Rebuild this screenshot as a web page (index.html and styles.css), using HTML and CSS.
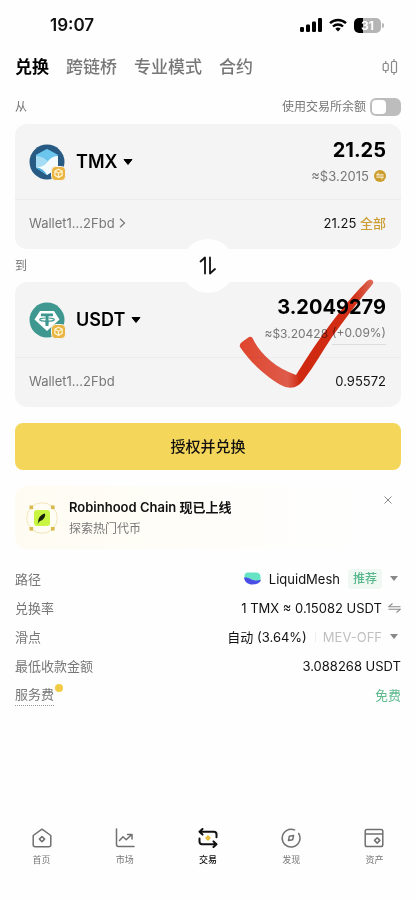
FILE: index.html
```html
<!DOCTYPE html>
<html lang="zh-CN">
<head>
<meta charset="utf-8">
<meta name="viewport" content="width=device-width, initial-scale=1">
<title>兑换</title>
<link rel="stylesheet" href="styles.css">
</head>
<body>
<div class="app">
  <header class="status">
    <span class="clock">19:07</span>
    <span class="indicators">
      <svg width="22" height="14" viewBox="0 0 22 14"><rect x="0" y="9" width="4" height="5" rx="1.2"/><rect x="6" y="6.500" width="4" height="7.500" rx="1.200"/><rect x="12" y="3.500" width="4" height="10.500" rx="1.200"/><rect x="18" y="0" width="4" height="14" rx="1.200"/></svg>
      <svg width="18" height="14" viewBox="0 0 18 14"><g fill="none" stroke="#000" stroke-width="2.400"><path d="M1 5.200a11.500 11.500 0 0 1 16 0"/><path d="M4 8.500a7.200 7.200 0 0 1 10 0"/></g><path d="M6.300 10.800a4 4 0 0 1 5.400 0L9 13.600z"/></svg>
      <span class="battery"><span class="level">31</span><span class="cap"></span></span>
    </span>
  </header>

  <nav class="tabs">
    <a href="#swap" class="tab active">兑换</a>
    <a href="#bridge" class="tab">跨链桥</a>
    <a href="#pro" class="tab">专业模式</a>
    <a href="#futures" class="tab">合约</a>
    <button class="icon-btn chart" aria-label="K线">
      <svg width="16" height="18" viewBox="0 0 16 18" fill="none" stroke="#888" stroke-width="1.200"><rect x="1.200" y="5.500" width="5" height="7" rx="1"/><path d="M3.700 3V5.500M3.700 12.500V15M12 1v2.500M12 14.500V17"/><rect x="9.500" y="3.500" width="5" height="11" rx="1"/></svg>
    </button>
  </nav>

  <main>
    <div class="line from">
      <span>从</span>
      <label class="balance">使用交易所余额<input type="checkbox" class="switch"></label>
    </div>

    <section class="card">
      <div class="top">
        <button class="token">
          <span class="coin">
            <svg width="36" height="36" viewBox="0 0 36 36"><circle cx="18" cy="18" r="17.500" fill="#285b83"/><path d="M18 5l11 6v13l-11 7-11-7V11z" fill="#4fb3e2"/><path d="M18 5l11 6-9 5.500c-4-2.500-8-3.500-13-4.500V11z" fill="#6cc5ec"/><path d="M7 12c5 .5 9 2 12 5-3 4-6 6-12 6z" fill="#a4dcf4"/><path d="M7 23c6 0 9-2 12-6 3-3.500 6-5 10-5v12l-11 7z" fill="#f4fbfe"/><path d="M7 23.500c4-.3 8 2.500 11 7.500z" fill="#48aadb"/></svg>
            <svg class="chain" width="15" height="15" viewBox="0 0 15 15"><rect x=".5" y=".5" width="14" height="14" rx="4" fill="#e9b440" stroke="#f4f4f4"/><path d="M7.500 3.200l3.600 2v4.200l-3.600 2.200-3.600-2.200V5.200zM4.500 5.500l3 1.700 3-1.700M7.500 7.200v3.800" fill="none" stroke="#fff3cf" stroke-width="1.300"/></svg>
          </span>
          <span>TMX</span>
          <svg width="10" height="6" viewBox="0 0 10 6"><path d="M1 .5h8L5 5.500z" stroke="#000" stroke-linejoin="round"/></svg>
        </button>
        <div class="amount">
          <span class="value">21.25</span>
          <span class="fiat">≈$3.2015
            <svg width="12" height="12" viewBox="0 0 12 12"><circle cx="6" cy="6" r="6" fill="#cc9d2b"/><path d="M9.600 4.900H2.600l2.200-2M2.400 7.100h7l-2.200 2" fill="none" stroke="#fff" stroke-width="1"/></svg>
          </span>
        </div>
      </div>
      <div class="bottom">
        <button class="wallet">Wallet1...2Fbd
          <svg width="7" height="10" viewBox="0 0 7 10" fill="none" stroke="#777" stroke-width="1.200"><path d="M1 .8l4.500 4.200L1 9.200"/></svg>
        </button>
        <span>21.25 <button class="all">全部</button></span>
      </div>
    </section>

    <div class="line to">
      <span>到</span>
      <button class="flip" aria-label="互换">
        <svg width="18" height="20" viewBox="0 0 18 20" fill="none" stroke="#111" stroke-width="1.800" stroke-linecap="round" stroke-linejoin="round"><path d="M1.500 5.500L6 1.500v16M11 1.500v16l5-4.500"/></svg>
      </button>
    </div>

    <section class="card">
      <div class="top">
        <button class="token">
          <span class="coin">
            <svg width="36" height="36" viewBox="0 0 36 36"><circle cx="18" cy="18" r="17.500" fill="#3f9890"/><path d="M11 9h14l5.500 8.500L18 29 5.500 17.500z" fill="#fff"/><path d="M12 11.500h12v2.800h-4.500v7.200h-3v-7.200H12z" fill="#3f9890"/><path d="M16.500 16c-8 .4-8 3.200 1.500 3.200s9.500-2.800 1.500-3.200" fill="none" stroke="#3f9890" stroke-width="1.200"/><path d="M16.500 19h3v5h-3z" fill="#3f9890"/></svg>
            <svg class="chain" width="15" height="15" viewBox="0 0 15 15"><rect x=".5" y=".5" width="14" height="14" rx="4" fill="#e9b440" stroke="#f4f4f4"/><path d="M7.500 3.200l3.600 2v4.200l-3.600 2.200-3.600-2.200V5.200zM4.500 5.500l3 1.700 3-1.700M7.500 7.200v3.800" fill="none" stroke="#fff3cf" stroke-width="1.300"/></svg>
          </span>
          <span>USDT</span>
          <svg width="10" height="6" viewBox="0 0 10 6"><path d="M1 .5h8L5 5.500z" stroke="#000" stroke-linejoin="round"/></svg>
        </button>
        <div class="amount">
          <span class="value">3.2049279</span>
          <span class="fiat change"><span>≈$3.20428</span><span class="hint">(+0.09%)</span></span>
        </div>
      </div>
      <div class="bottom">
        <span class="wallet">Wallet1...2Fbd</span>
        <span>0.95572</span>
      </div>
      <svg class="mark" width="136" height="112" viewBox="0 0 136 112">
        <defs><linearGradient id="ink" x1="0" y1="0" x2="1" y2="0"><stop offset="0" stop-color="#e9482f"/><stop offset=".36" stop-color="#e8604e"/><stop offset=".45" stop-color="#d92a10"/><stop offset=".85" stop-color="#dc3015"/><stop offset="1" stop-color="#e6705e"/></linearGradient></defs>
        <path d="M1 68Q0 65 3 63L10 58Q13 57 14 60C22 76 36 88 57 96C64 85 72 72 82 58C92 44 108 22 128 2Q132-1 134 2Q135 4 133 6C117 25 104 43 93 58C83 73 75 87 66 99C59 110 51 110 44 107C29 100 11 83 1 68Z" fill="url(#ink)"/>
      </svg>
    </section>

    <button class="submit">授权并兑换</button>

    <aside class="banner">
      <svg width="32" height="32" viewBox="0 0 32 32"><circle cx="16" cy="16" r="15.300" fill="none" stroke="#f1e6b9"/><g fill="#d9b94c"><rect x="3.500" y="3.500" width="3.600" height="3.600"/><rect x="25" y="3.500" width="3.600" height="3.600"/><rect x="3.500" y="25" width="3.600" height="3.600"/><rect x="25" y="25" width="3.600" height="3.600"/></g><rect x="8" y="8" width="16" height="16" rx="3" fill="#c8f542"/><path d="M12.200 20.500c-.2-4.500 2.300-7.600 6.800-9 .8 2-.6 5-3 6.800l-2.200.7z" fill="#17210a"/><path d="M11.800 21.500l5-7" stroke="#17210a" stroke-width=".6"/></svg>
      <div class="copy"><strong>Robinhood Chain 现已上线</strong><span>探索热门代币</span></div>
      <button class="icon-btn close" aria-label="关闭"><svg width="8" height="8" viewBox="0 0 8 8" stroke="#888"><path d="M.5.5l7 7M7.500.5l-7 7"/></svg></button>
    </aside>

    <dl class="details">
      <div><dt>路径</dt><dd>
        <svg class="mesh" width="17" height="13" viewBox="0 0 17 13"><path d="M.5 3C1 1 2.500.5 5 .5h7c3 0 4.500 1.500 4.500 4.500v3.500C11 11 8 5.500.5 6z" fill="#66e3c4"/><path d="M0 5.500c7-.5 9 5 17 2.300-1 3.200-4 4.700-8.500 4.700S.5 10 0 5.500z" fill="#494ee5"/></svg>
        <span>LiquidMesh</span><span class="tag">推荐</span><svg class="drop" width="8" height="5" viewBox="0 0 8 5"><path d="M0 0h8L4 5z"/></svg></dd></div>
      <div><dt>兑换率</dt><dd><span>1 TMX ≈ 0.15082 USDT</span><svg class="rate" width="13" height="10" viewBox="0 0 13 10" fill="none" stroke="#888" stroke-width="1.100"><path d="M12.500 3.700H.8L4.500.5M.5 6.300h11.700L8.500 9.500"/></svg></dd></div>
      <div><dt>滑点</dt><dd><span>自动 (3.64%)</span><span class="mev">MEV-OFF</span><svg class="drop" width="8" height="5" viewBox="0 0 8 5"><path d="M0 0h8L4 5z"/></svg></dd></div>
      <div><dt>最低收款金额</dt><dd>3.088268 USDT</dd></div>
      <div><dt class="fee">服务费</dt><dd class="free">免费</dd></div>
    </dl>
  </main>

  <nav class="dock">
    <a href="#home"><svg width="20" height="20" viewBox="0 0 20 20"><path d="M1.200 7.500L10 1.200l8.800 6.300v9.300q0 2-2 2H3.200q-2 0-2-2z"/><path d="M10 8.500l2.600 2.600-2.600 2.600-2.600-2.600z"/></svg>首页</a>
    <a href="#market"><svg width="20" height="20" viewBox="0 0 20 20"><path d="M1.500 1v15.500q0 2 2 2H19M4.500 12.500L8 8.800l3.200 2.900 5.300-5M12.500 6.500H17V11"/></svg>市场</a>
    <a href="#trade" class="active"><svg width="20" height="20" viewBox="0 0 20 20"><path d="M4.500 1L1.500 3.800l3 2.800M2 3.800h14q2.500 0 2.500 2.500v3M1.500 10.500v3q0 2.700 2.500 2.700h14M15.500 13.400l3 2.800-3 2.800"/><path class="gem" d="M10 7l3 3-3 3-3-3z"/></svg>交易</a>
    <a href="#discover"><svg width="20" height="20" viewBox="0 0 20 20"><path d="M13.500 1.900A8.900 8.900 0 1 0 17.700 5.500M7.500 12.600l.8-4.300 4.300-.9-.9 4.300z"/></svg>发现</a>
    <a href="#assets"><svg width="20" height="20" viewBox="0 0 20 20"><path d="M3 1.500h14q1.800 0 1.800 1.800v13.400q0 1.800-1.800 1.800H3q-1.800 0-1.800-1.800V3.300Q1.200 1.500 3 1.500zM1.200 6h17.600M13.200 9.700l2.700 2.700-2.700 2.700-2.700-2.700z"/></svg>资产</a>
  </nav>
</div>
</body>
</html>
```

FILE: styles.css
```css
* { box-sizing: border-box; }

body {
  margin: 0;
  background: #fefefe;
  color: #111;
  font: 14px/20px Inter, "Noto Sans CJK SC", sans-serif;
}

button {
  margin: 0;
  padding: 0;
  border: 0;
  background: none;
  color: inherit;
  font: inherit;
}

a { color: inherit; text-decoration: none; }
svg { display: block; flex: none; }

.app { display: flex; flex-direction: column; min-height: 100vh; }

.status {
  display: flex;
  justify-content: space-between;
  align-items: center;
  height: 50px;
  padding: 0 32px 0 50px;
}
.clock { font-size: 17px; font-weight: 600; }
.indicators { display: flex; align-items: center; gap: 7px; }
.battery { display: flex; align-items: center; gap: 1px; }
.level {
  width: 27px;
  height: 15px;
  border-radius: 5px;
  background: linear-gradient(90deg, #000 32%, #b5b5b5 32%);
  color: #fff;
  font-size: 12px;
  line-height: 15px;
  font-weight: 700;
  text-align: center;
}
.cap { width: 2px; height: 5px; border-radius: 0 2px 2px 0; background: #b5b5b5; }

.tabs {
  display: flex;
  align-items: center;
  gap: 17px;
  height: 34px;
  padding: 0 18px 0 15px;
  color: #777;
  font-size: 17px;
  font-weight: 500;
}
.tab.active { color: #000; font-weight: 700; }
.chart { margin-left: auto; }

main { padding: 0 15px; }

.line { display: flex; justify-content: space-between; align-items: center; color: #777; font-size: 12px; }
.from { height: 40px; padding-top: 6px; }
.to { position: relative; height: 33px; }
.balance { display: flex; align-items: center; gap: 4px; }
.switch {
  appearance: none;
  display: flex;
  width: 31px;
  height: 18px;
  margin: 0;
  padding: 2px;
  border-radius: 6px;
  background: #bdbdbd;
}
.switch::before { content: ""; width: 14px; height: 14px; border-radius: 4px; background: #fff; }

.flip {
  position: absolute;
  z-index: 1;
  top: 50%;
  left: 50%;
  display: grid;
  place-items: center;
  width: 54px;
  height: 54px;
  border-radius: 50%;
  background: #fefefe;
  transform: translate(-50%, -50%);
}

.card { position: relative; border-radius: 12px; background: #f4f4f4; }
.top, .bottom { display: flex; justify-content: space-between; align-items: center; padding: 0 15px 0 14px; }
.top { height: 76px; border-bottom: 1px solid #ececec; }
.bottom { height: 49px; padding-bottom: 4px; font-size: 13px; }
.token { display: flex; align-items: center; gap: 6px; font-size: 18px; font-weight: 600; color: #000; }
.coin { position: relative; margin-right: 5px; }
.chain { position: absolute; right: -1px; bottom: -1px; }
.amount { display: flex; flex-direction: column; align-items: flex-end; gap: 1px; }
.value { color: #000; font-size: 20px; line-height: 27px; font-weight: 700; }
.fiat { display: flex; align-items: center; gap: 5px; color: #777; font-size: 13px; line-height: 22px; }
.change { gap: 4px; font-size: 12px; }
.hint { border-bottom: 1px solid #ddd; }
.wallet { display: flex; align-items: center; gap: 4px; color: #777; }
.all { color: #cc9d35; font-weight: 500; }
.mark { position: absolute; right: 26px; top: -3px; pointer-events: none; mix-blend-mode: multiply; }

.submit {
  display: block;
  width: 100%;
  height: 47px;
  margin: 16px 0;
  border-radius: 8px;
  background: #f4d65a;
  color: #111;
  font-size: 15px;
  font-weight: 500;
}

.banner {
  display: flex;
  align-items: center;
  gap: 11px;
  height: 63px;
  padding: 0 9px 0 11px;
  border-radius: 12px;
  background: linear-gradient(90deg, #fefcf2, #fefefe 90%);
}
.copy { display: flex; flex-direction: column; flex: 1; gap: 2px; color: #777; font-size: 12px; }
.copy strong { color: #111; font-size: 13px; font-weight: 600; }
.close { align-self: flex-start; padding-top: 10px; }

.details { margin: 15px 0 0; }
.details > div { display: flex; justify-content: space-between; align-items: center; height: 29px; }
dt { color: #777; font-size: 13px; }
dd { display: flex; align-items: center; margin: 0; font-size: 13px; }
.mesh { margin-right: 8px; }
.tag { margin-left: 8px; padding: 0 5px; border-radius: 3px; background: #eff8f3; color: #56b88b; font-size: 12px; font-weight: 500; }
.drop { margin: 0 3px 0 8px; fill: #888; }
.rate { margin-left: 6px; }
.mev { margin-left: 8px; padding-left: 8px; color: #c0c0c0; background: linear-gradient(#eee, #eee) left center / 1px 10px no-repeat; }
.fee { position: relative; border-bottom: 1px dotted #999; padding-bottom: 1px; }
.fee::after { content: ""; position: absolute; top: 0; right: -9px; width: 8px; height: 8px; border-radius: 50%; background: #f1cb44; }
.free { color: #5fba8e; }

.dock { display: flex; margin-top: auto; padding-bottom: 32px; }
.dock a { display: flex; flex: 1; flex-direction: column; align-items: center; gap: 4px; color: #777; font-size: 9px; line-height: 16px; }
.dock svg { fill: none; stroke: #707070; stroke-width: 1.5; stroke-linecap: round; stroke-linejoin: round; }
.dock .active { color: #111; font-weight: 500; }
.dock .active svg { stroke: #111; stroke-width: 2; }
.dock .gem { fill: #e8bd38; stroke: none; }
```
